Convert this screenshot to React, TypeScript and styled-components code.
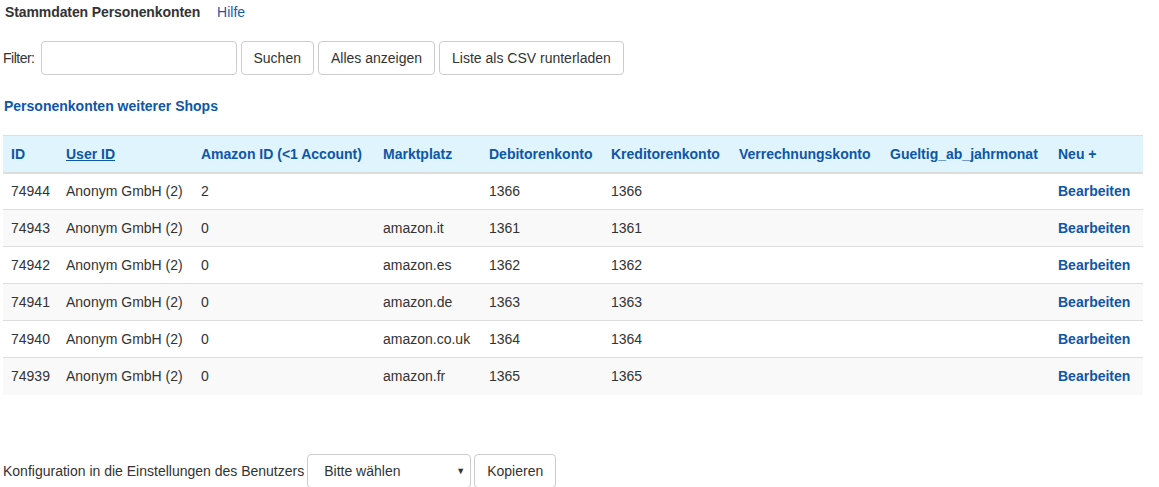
import styled, { createGlobalStyle } from "styled-components";

type Row = {
	id: string;
	user: string;
	amazonId: string;
	market: string;
	debit: string;
	credit: string;
};

const rows: Row[] = [
	{ id: "74944", user: "Anonym GmbH (2)", amazonId: "2", market: "", debit: "1366", credit: "1366" },
	{ id: "74943", user: "Anonym GmbH (2)", amazonId: "0", market: "amazon.it", debit: "1361", credit: "1361" },
	{ id: "74942", user: "Anonym GmbH (2)", amazonId: "0", market: "amazon.es", debit: "1362", credit: "1362" },
	{ id: "74941", user: "Anonym GmbH (2)", amazonId: "0", market: "amazon.de", debit: "1363", credit: "1363" },
	{ id: "74940", user: "Anonym GmbH (2)", amazonId: "0", market: "amazon.co.uk", debit: "1364", credit: "1364" },
	{ id: "74939", user: "Anonym GmbH (2)", amazonId: "0", market: "amazon.fr", debit: "1365", credit: "1365" },
];

const columns = [
	{ label: "ID", width: 55 },
	{ label: "User ID", width: 135, sortable: true },
	{ label: "Amazon ID (<1 Account)", width: 182 },
	{ label: "Marktplatz", width: 106 },
	{ label: "Debitorenkonto", width: 122 },
	{ label: "Kreditorenkonto", width: 128 },
	{ label: "Verrechnungskonto", width: 151 },
	{ label: "Gueltig_ab_jahrmonat", width: 168 },
	{ label: "Neu +", width: 93 },
];

export default function App() {
	return (
		<>
			<GlobalStyle />
			<Page>
				<TitleBar>
					<Title>Stammdaten Personenkonten</Title>
					<HelpLink href="#">Hilfe</HelpLink>
				</TitleBar>

				<FilterBar>
					<Label $tight>Filter:</Label>
					<TextInput type="text" />
					<Button>Suchen</Button>
					<Button>Alles anzeigen</Button>
					<Button>Liste als CSV runterladen</Button>
				</FilterBar>

				<SectionLink href="#">Personenkonten weiterer Shops</SectionLink>

				<Table>
					<colgroup>
						{columns.map((c) => (
							<col key={c.label} style={{ width: c.width }} />
						))}
					</colgroup>
					<thead>
						<tr>
							{columns.map((c) => (
								<Th key={c.label} $underline={c.sortable}>
									{c.label}
								</Th>
							))}
						</tr>
					</thead>
					<tbody>
						{rows.map((r) => (
							<Tr key={r.id}>
								<Td>{r.id}</Td>
								<Td>{r.user}</Td>
								<Td>{r.amazonId}</Td>
								<Td>{r.market}</Td>
								<Td>{r.debit}</Td>
								<Td>{r.credit}</Td>
								<Td />
								<Td />
								<Td>
									<EditLink href="#">Bearbeiten</EditLink>
								</Td>
							</Tr>
						))}
					</tbody>
				</Table>

				<CopyBar>
					<Label>Konfiguration in die Einstellungen des Benutzers</Label>
					<SelectBox>
						<span>Bitte wählen</span>
						<Caret>▼</Caret>
					</SelectBox>
					<Button>Kopieren</Button>
				</CopyBar>
			</Page>
		</>
	);
}

const GlobalStyle = createGlobalStyle`
	body {
		margin: 0;
		background: #fff;
		font-family: "Liberation Sans", Arial, sans-serif;
		font-size: 14px;
		color: #333;
	}
`;

const Page = styled.div`
	padding: 0 0 0 2px;
`;

const TitleBar = styled.div`
	display: flex;
	align-items: baseline;
	gap: 17px;
	height: 24px;
	padding: 4px 0 0 3px;
	font-size: 14px;
`;

const Title = styled.span`
	font-weight: bold;
	color: #333;
	letter-spacing: -0.1px;
`;

const HelpLink = styled.a`
	color: #1c5aa6;
	text-decoration: none;
`;

const FilterBar = styled.div`
	display: flex;
	align-items: center;
	gap: 4px;
	margin-top: 13px;
	padding-left: 1px;
`;

const Label = styled.span<{ $tight?: boolean }>`
	font-size: 14px;
	color: #333;
	letter-spacing: ${(p) => (p.$tight ? "-0.5px" : "0")};
	margin-right: ${(p) => (p.$tight ? "2px" : "0")};
`;

const TextInput = styled.input`
	box-sizing: border-box;
	width: 196px;
	height: 34px;
	border: 1px solid #ccc;
	border-radius: 4px;
	outline: none;
`;

const Button = styled.button`
	box-sizing: border-box;
	height: 34px;
	padding: 0 12px;
	background: #fff;
	border: 1px solid #ccc;
	border-radius: 4px;
	font-family: inherit;
	font-size: 14px;
	color: #333;
`;

const SectionLink = styled.a`
	display: block;
	margin: 23px 0 0 2px;
	font-size: 14px;
	font-weight: bold;
	color: #0e56a7;
	text-decoration: none;
`;

const Table = styled.table`
	margin-top: 21px;
	width: 1140px;
	table-layout: fixed;
	border-collapse: collapse;
	border-spacing: 0;
	margin-left: 1px;
`;

const Th = styled.th<{ $underline?: boolean }>`
	height: 37px;
	box-sizing: border-box;
	padding: 0 8px;
	text-align: left;
	white-space: nowrap;
	background: #dff4fd;
	border-top: 1px solid #ddd;
	border-bottom: 2px solid #ddd;
	color: #0e56a7;
	font-weight: bold;
	font-size: 14px;
	text-decoration: ${(p) => (p.$underline ? "underline" : "none")};
`;

const Tr = styled.tr`
	&:nth-child(even) {
		background: #f9f9f9;
	}
	&:not(:last-child) td {
		border-bottom: 1px solid #ddd;
	}
`;

const Td = styled.td`
	height: 37px;
	box-sizing: border-box;
	padding: 0 8px;
	white-space: nowrap;
	color: #333;
`;

const EditLink = styled.a`
	color: #0e56a7;
	font-weight: bold;
	text-decoration: none;
`;

const CopyBar = styled.div`
	display: flex;
	align-items: center;
	gap: 3px;
	margin-top: 59px;
	padding-left: 1px;
`;

const SelectBox = styled.div`
	box-sizing: border-box;
	width: 164px;
	height: 34px;
	display: flex;
	align-items: center;
	justify-content: space-between;
	padding: 0 5px 0 16px;
	border: 1px solid #ccc;
	border-radius: 4px;
	color: #333;
`;

const Caret = styled.span`
	font-size: 9px;
	color: #333;
`;
